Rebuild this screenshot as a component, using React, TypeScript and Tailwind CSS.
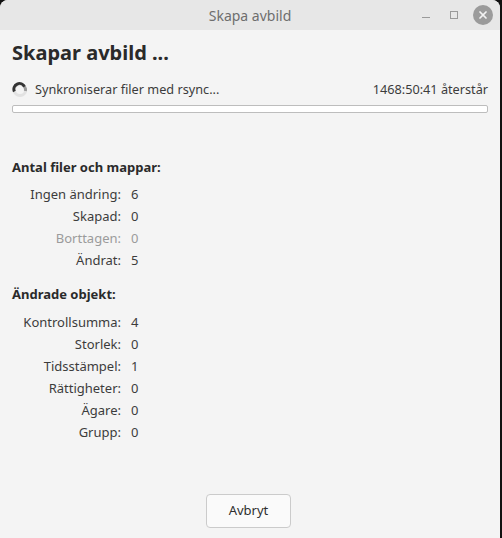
import { X } from "lucide-react";

const font = { fontFamily: '"Noto Sans", "Open Sans", sans-serif' };

type Row = { label: string; value: number; dim?: boolean };

const filer: Row[] = [
  { label: "Ingen ändring:", value: 6 },
  { label: "Skapad:", value: 0 },
  { label: "Borttagen:", value: 0, dim: true },
  { label: "Ändrat:", value: 5 },
];

const objekt: Row[] = [
  { label: "Kontrollsumma:", value: 4 },
  { label: "Storlek:", value: 0 },
  { label: "Tidsstämpel:", value: 1 },
  { label: "Rättigheter:", value: 0 },
  { label: "Ägare:", value: 0 },
  { label: "Grupp:", value: 0 },
];

function Spinner() {
  return (
    <svg width="16" height="16" viewBox="0 0 16 16" className="shrink-0">
      <circle cx="8" cy="8" r="5.6" fill="none" stroke="#e2e2e2" strokeWidth="3" />
      <path d="M2.4 9.5 A5.6 5.6 0 0 1 12.6 4.8" fill="none" stroke="#333" strokeWidth="3" />
      <path d="M12.6 4.8 A5.6 5.6 0 0 1 13.4 9" fill="none" stroke="#9a9a9a" strokeWidth="3" />
    </svg>
  );
}

function Stats({ rows, top }: { rows: Row[]; top: string }) {
  return (
    <div className={`grid grid-cols-[109px_auto] gap-x-[10px] ${top}`}>
      {rows.map((r) => (
        <div key={r.label} className="contents">
          <span className={`text-right h-[22px] leading-[22px] ${r.dim ? "text-[#9b9b9b]" : ""}`}>{r.label}</span>
          <span className={`h-[22px] leading-[22px] ${r.dim ? "text-[#9b9b9b]" : ""}`}>{r.value}</span>
        </div>
      ))}
    </div>
  );
}

export default function App() {
  return (
    <div className="w-[502px] h-[538px] bg-[#111] flex" style={font}>
      <div className="w-[500px] h-full bg-[#f4f4f4] rounded-t-[8px] flex flex-col text-[13px] text-[#3c3c3c] overflow-hidden">
        {/* titlebar */}
        <div className="h-[30px] bg-[#e7e7e7] flex items-center relative shrink-0">
          <span className="flex-1 text-center text-[14px] text-[#6e6e6e]">Skapa avbild</span>
          <div className="absolute right-[7px] top-0 h-full flex items-center gap-[15px]">
            <span className="w-[8px] h-[1px] bg-[#9a9a9a] mt-[4px]" />
            <span className="w-[8px] h-[8px] border border-[#9a9a9a] ml-[5px]" />
            <span className="w-[20px] h-[20px] rounded-full bg-[#9b9b9b] flex items-center justify-center">
              <X size={12} strokeWidth={3.5} color="#f2f2f2" />
            </span>
          </div>
        </div>

        <div className="flex-1 flex flex-col px-[12px]">
          <h1 className="text-[20px] font-bold text-[#2a2a2a] mt-[9px] leading-[28px]">Skapar avbild ...</h1>

          <div className="flex items-center mt-[14px] gap-[7px] h-[18px]">
            <Spinner />
            <span className="flex-1 text-[12.7px]">Synkroniserar filer med rsync...</span>
            <span className="text-[12.7px]">1468:50:41 återstår</span>
          </div>
          <div className="mt-[6px] h-[8px] rounded-[2px] border border-[#bdbdbd] bg-white" />

          <div className="mt-[44px] font-bold text-[#2a2a2a] leading-[20px]">Antal filer och mappar:</div>
          <Stats rows={filer} top="mt-[6px]" />

          <div className="mt-[13px] font-bold text-[#2a2a2a] leading-[20px]">Ändrade objekt:</div>
          <Stats rows={objekt} top="mt-[7px]" />

          <div className="flex-1" />
          <div className="flex justify-center mb-[10px]">
            <button className="w-[85px] h-[34px] rounded-[4px] border border-[#cbcbcb] bg-[#fafafa] text-[#2e2e2e] mr-[3px]">
              Avbryt
            </button>
          </div>
        </div>
      </div>
    </div>
  );
}
